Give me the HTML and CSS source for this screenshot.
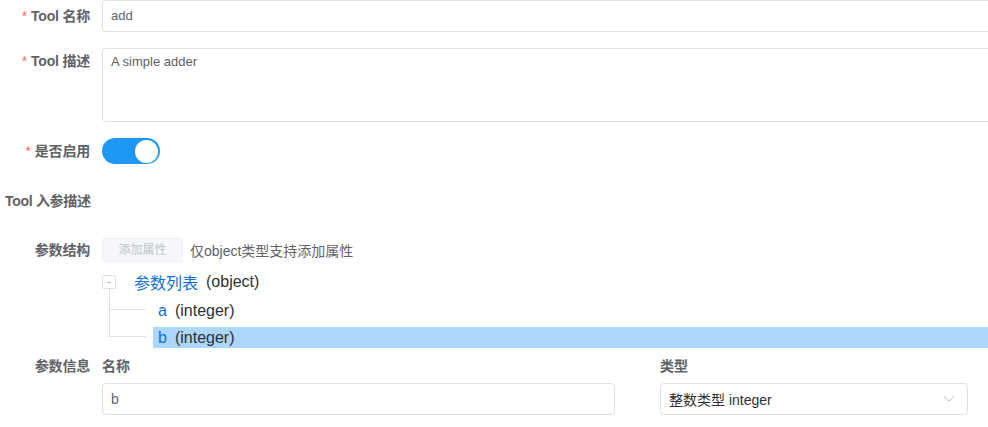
FILE: index.html
```html
<!DOCTYPE html>
<html lang="zh-CN">
<head>
<meta charset="utf-8">
<title>Tool</title>
<link rel="stylesheet" href="styles.css">
</head>
<body>
<div class="form">
  <div class="item item-input">
    <label class="label"><span class="req">*</span>Tool 名称</label>
    <div class="control"><div class="input">add</div></div>
  </div>
  <div class="item item-textarea">
    <label class="label label-top"><span class="req">*</span>Tool 描述</label>
    <div class="control"><div class="textarea">A simple adder</div></div>
  </div>
  <div class="item item-switch">
    <label class="label"><span class="req">*</span>是否启用</label>
    <div class="control"><span class="switch"><span class="knob"></span></span></div>
  </div>
  <div class="section-title">Tool 入参描述</div>
  <div class="item item-struct">
    <label class="label">参数结构</label>
    <div class="control struct">
      <span class="btn-disabled">添加属性</span>
      <span class="hint">仅object类型支持添加属性</span>
    </div>
  </div>
  <div class="tree">
    <div class="tree-row root">
      <span class="toggle">-</span>
      <span class="node"><span class="node-name">参数列表</span><span class="node-type">(object)</span></span>
    </div>
    <div class="children">
      <div class="tree-row child">
        <span class="node"><span class="node-name">a</span><span class="node-type">(integer)</span></span>
      </div>
      <div class="tree-row child last">
        <span class="node selected"><span class="node-name">b</span><span class="node-type">(integer)</span></span>
      </div>
    </div>
  </div>
  <div class="item item-info">
    <label class="label">参数信息</label>
    <div class="control info-grid">
      <div class="field">
        <div class="field-label">名称</div>
        <div class="input">b</div>
      </div>
      <div class="field field-type">
        <div class="field-label">类型</div>
        <div class="select"><span>整数类型 integer</span>
          <svg class="arrow" width="12" height="8" viewBox="0 0 12 8"><path d="M1 1.5 L6 6 L11 1.5" fill="none" stroke="#b4b8bf" stroke-width="1"/></svg>
        </div>
      </div>
    </div>
  </div>
</div>
</body>
</html>
```

FILE: styles.css
```css
html, body {
  margin: 0;
  padding: 0;
  background: #ffffff;
}
body {
  width: 988px;
  height: 427px;
  overflow: hidden;
  font-family: "Liberation Sans", "Noto Sans CJK SC", sans-serif;
  color: #606266;
}
.form {
  width: 1010px;
}
.item {
  display: flex;
  align-items: flex-start;
}
.label {
  width: 90px;
  flex: none;
  padding-right: 12px;
  text-align: right;
  font-size: 14px;
  font-weight: 700;
  color: #606266;
  line-height: 32px;
  letter-spacing: -0.2px;
}
.req {
  color: #f56c6c;
  margin-right: 4px;
  font-weight: 400;
}
.control {
  flex: 1;
  min-width: 0;
}
.input {
  height: 30px;
  line-height: 30px;
  border: 1px solid #dcdfe6;
  border-radius: 4px;
  padding: 0 8px;
  font-size: 13px;
  color: #606266;
}
.item-textarea {
  margin-top: 16px;
}
.label-top {
  line-height: 26px;
}
.textarea {
  height: 62px;
  border: 1px solid #dcdfe6;
  border-radius: 4px;
  padding: 5px 8px 5px 8px;
  font-size: 13px;
  line-height: 16px;
  color: #606266;
}
.item-switch {
  margin-top: 16px;
  align-items: center;
}
.item-switch .label {
  line-height: 26px;
}
.switch {
  display: flex;
  align-items: center;
  justify-content: flex-end;
  width: 58px;
  height: 26px;
  border-radius: 13px;
  background: #1f97f4;
  box-sizing: border-box;
  padding: 0 2px;
}
.knob {
  width: 23px;
  height: 23px;
  border-radius: 50%;
  background: #ffffff;
}
.section-title {
  margin-top: 27px;
  padding-left: 5px;
  font-size: 14px;
  font-weight: 700;
  line-height: 20px;
  color: #606266;
  letter-spacing: -0.3px;
}
.item-struct {
  margin-top: 27px;
  align-items: center;
}
.item-struct .label {
  line-height: 24px;
}
.struct {
  display: flex;
  align-items: center;
  gap: 7px;
}
.btn-disabled {
  width: 79px;
  height: 22px;
  line-height: 22px;
  text-align: center;
  border: 1px solid #ebeef5;
  background: #f5f7fa;
  border-radius: 3px;
  font-size: 12px;
  color: #c0c4cc;
}
.hint {
  font-size: 14px;
  color: #606266;
}
.tree {
  margin-top: 6px;
  padding-left: 102px;
  font-size: 16px;
}
.tree-row {
  display: flex;
  align-items: center;
  height: 27px;
}
.toggle {
  width: 12px;
  height: 12px;
  border: 1px solid #dcdfe6;
  border-radius: 2px;
  font-size: 11px;
  line-height: 11px;
  text-align: center;
  color: #909399;
  margin-right: 13px;
}
.node {
  display: flex;
  align-items: center;
  height: 21px;
  padding: 0 5px;
}
.node-name {
  color: #1170d4;
  margin-right: 8px;
}
.node-type {
  color: #303133;
}
.children {
  position: relative;
  margin-top: 2px;
  padding-left: 51px;
}
.children::before {
  content: "";
  position: absolute;
  left: 7px;
  top: -8px;
  height: 47px;
  border-left: 1px solid #dcdfe6;
}
.child {
  position: relative;
}
.child::before {
  content: "";
  position: absolute;
  left: -44px;
  top: 12px;
  width: 37px;
  border-top: 1px solid #dcdfe6;
}
.child.last .node {
  flex: 1;
}
.selected {
  background: #acd6fa;
}
.item-info {
  margin-top: 5px;
}
.item-info .label {
  line-height: 20px;
}
.info-grid {
  display: flex;
  gap: 45px;
}
.field {
  width: 513px;
  flex: none;
}
.field-type {
  width: 308px;
}
.field-label {
  font-size: 14px;
  font-weight: 700;
  line-height: 20px;
  color: #606266;
  margin-bottom: 7px;
}
.field .input {
  font-size: 14px;
}
.select {
  display: flex;
  align-items: center;
  justify-content: space-between;
  height: 30px;
  border: 1px solid #dcdfe6;
  border-radius: 4px;
  padding: 0 12px 0 8px;
  font-size: 14px;
  color: #303133;
}
.arrow {
  display: block;
}
```
